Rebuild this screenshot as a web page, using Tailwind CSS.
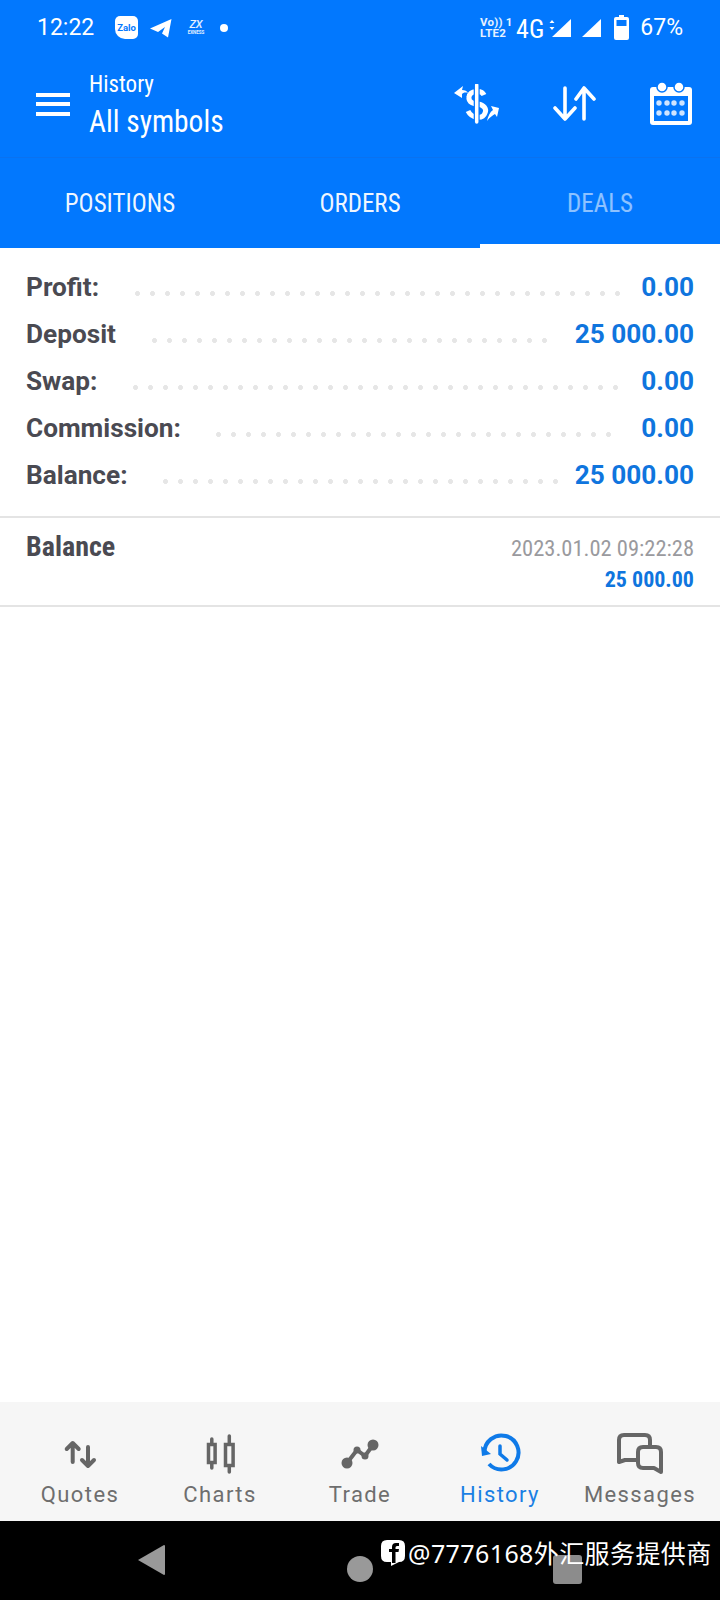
<!DOCTYPE html>
<html lang="en">
<head>
    <meta charset="UTF-8">
    <meta name="viewport" content="width=device-width, initial-scale=1.0">
    <title>History</title>
    <script src="https://cdn.jsdelivr.net/npm/@tailwindcss/browser@4"></script>
</head>
<body class="font-['Roboto',sans-serif] bg-white">
<div class="relative w-[720px] h-[1600px] flex flex-col overflow-hidden">

    <!-- status bar -->
    <div class="h-[52px] shrink-0 bg-[#0278fe] text-white flex items-center pl-[37px] pt-[3px]">
        <span class="text-[23px] w-[78px] mt-[2px]">12:22</span>
        <div class="w-[23px] h-[23px] bg-white rounded-[5px] rounded-bl-[10px] flex items-center justify-center">
            <span class="text-[#0278fe] text-[9.500px] font-bold leading-none">Zalo</span>
        </div>
        <svg class="ml-[12px]" width="22" height="20" viewBox="0 0 22 20"><path d="M0 10.500 L21.500 1 L18 19.500 L12 15.500 L15 9 L8 14 Z" fill="#fff"/></svg>
        <div class="ml-[15px] w-[18px] flex flex-col items-center leading-none">
            <span class="text-[11px] italic font-medium leading-[10px] text-white/90">ZX</span>
            <span class="text-[4.500px] font-bold leading-[5px] text-white/90">EXNESS</span>
        </div>
        <div class="ml-[15px] w-[8px] h-[8px] rounded-full bg-white"></div>

        <div class="ml-auto flex items-center">
            <div class="w-[28px] flex flex-col text-[11.500px] font-bold leading-[11px] tracking-[0.2px] text-white/90">
                <span class="whitespace-nowrap">Vo)) 1</span>
                <span class="whitespace-nowrap">LTE2</span>
            </div>
            <span class="ml-[8px] mt-[2px] text-[26px] leading-[30px] [font-stretch:75%]">4G</span>
            <svg class="ml-[5px]" width="22" height="20" viewBox="0 0 22 20">
                <path d="M3 3 L5.500 6 H0.500 Z M3 13 L0.500 10 H5.500 Z" fill="#fff" transform="translate(0 -1)"/>
                <path d="M22 1 V19 H3 Z" fill="#fff"/>
            </svg>
            <svg class="ml-[10px]" width="20" height="20" viewBox="0 0 20 20"><path d="M20 1 V19 H1 Z" fill="#fff"/></svg>
            <svg class="ml-[13px]" width="15" height="25" viewBox="0 0 15 25">
                <path d="M5 0 H10 V2 H13 Q15 2 15 4 V23 Q15 25 13 25 H2 Q0 25 0 23 V4 Q0 2 2 2 H5 Z" fill="#fff"/>
                <rect x="2.500" y="5" width="10" height="6" fill="#0278fe"/>
            </svg>
            <span class="ml-[11px] mr-[37px] mt-[2px] text-[23px]">67%</span>
        </div>
    </div>

    <!-- header -->
    <div class="h-[106px] shrink-0 bg-[#0278fe] border-b border-[#0a72f0] text-white flex items-center pl-[36px] pb-[1px]">
        <div class="w-[34px] h-[23px] flex flex-col justify-between">
            <div class="h-[4px] bg-white"></div>
            <div class="h-[4px] bg-white"></div>
            <div class="h-[4px] bg-white"></div>
        </div>
        <div class="ml-[19px] mt-[3px] flex flex-col [font-stretch:75%]">
            <span class="text-[23px] leading-[30px]">History</span>
            <span class="text-[32px] leading-[42px] scale-x-[0.92] origin-left whitespace-nowrap">All symbols</span>
        </div>
        <div class="ml-auto flex items-center pr-[27px]">
            <svg width="46" height="40" viewBox="0 0 46 40" fill="none">
                <path d="M30 11 C28 6 16 6 15 13 C14 19 21 20 24 20 C30 21 33 25 31 29 C29 35 18 35 14 27" stroke="#fff" stroke-width="5"/>
                <path d="M22.700 1 V38" stroke="#0278fe" stroke-width="6"/>
                <path d="M22.700 1 V38" stroke="#fff" stroke-width="3.500" stroke-linecap="round"/>
                <path d="M0 9 L9 2 L8 6 C11 6 13 7 14 9 C11 8 9 9 8 10 L8 14 Z" fill="#fff"/>
                <path d="M45 24 L37 22 L39 26 C36 28 34 32 33 37 C36 33 39 31 41 30 L43 33 Z" fill="#fff"/>
            </svg>
            <svg class="ml-[53px]" width="43" height="36" viewBox="0 0 43 36" fill="none" stroke="#fff" stroke-width="3.600" stroke-linecap="round" stroke-linejoin="round">
                <path d="M12 2 V33 M2 22 L12 33 L22 22"/>
                <path d="M31 33 V2 M23 13 L31 2 L41 13"/>
            </svg>
            <svg class="ml-[53px]" width="44" height="44" viewBox="0 0 44 44">
                <path d="M4 5 H40 Q43 5 43 8 V40 Q43 43 40 43 H4 Q1 43 1 40 V8 Q1 5 4 5 Z" fill="#fff"/>
                <path d="M5 14 H39 V39 H5 Z" fill="#0278fe"/>
                <circle cx="13" cy="5" r="5" fill="#fff" stroke="#0278fe" stroke-width="1.500"/>
                <circle cx="30" cy="5" r="5" fill="#fff" stroke="#0278fe" stroke-width="1.500"/>
                <g fill="#cfe4ff">
                    <circle cx="10" cy="21" r="2.700"/><circle cx="18" cy="21" r="2.700"/><circle cx="25" cy="21" r="2.700"/><circle cx="33" cy="21" r="2.700"/>
                    <circle cx="10" cy="31" r="2.700"/><circle cx="18" cy="31" r="2.700"/><circle cx="25" cy="31" r="2.700"/><circle cx="33" cy="31" r="2.700"/>
                </g>
            </svg>
        </div>
    </div>

    <!-- tabs -->
    <div class="h-[90px] shrink-0 bg-[#0278fe] grid grid-cols-3 text-[25px] font-[450] [font-stretch:75%]">
        <div class="flex items-center justify-center pt-[2px] text-white/95">POSITIONS</div>
        <div class="flex items-center justify-center pt-[2px] text-white/95">ORDERS</div>
        <div class="flex items-center justify-center pt-[5px] border-b-[4px] border-white text-white/55">DEALS</div>
    </div>

    <!-- summary -->
    <div class="h-[270px] shrink-0 border-b-2 border-[#e4e4e4] pt-[16px] pl-[26px] pr-[26px] flex flex-col text-[26.200px] font-bold text-[#4a4a52]">
        <div class="h-[47px] flex items-center">
            <span>Profit:</span>
            <div class="ml-[31px] w-[495px] h-[15px] mt-[11px] bg-[radial-gradient(circle,#e6e6e6_2.2px,transparent_2.6px)] bg-[length:15px_15px]"></div>
            <span class="ml-auto text-[#0f75de]">0.00</span>
        </div>
        <div class="h-[47px] flex items-center">
            <span>Deposit</span>
            <div class="ml-[31px] w-[405px] h-[15px] mt-[11px] bg-[radial-gradient(circle,#e6e6e6_2.2px,transparent_2.6px)] bg-[length:15px_15px]"></div>
            <span class="ml-auto text-[#0f75de]">25 000.00</span>
        </div>
        <div class="h-[47px] flex items-center">
            <span>Swap:</span>
            <div class="ml-[31px] w-[495px] h-[15px] mt-[11px] bg-[radial-gradient(circle,#e6e6e6_2.2px,transparent_2.6px)] bg-[length:15px_15px]"></div>
            <span class="ml-auto text-[#0f75de]">0.00</span>
        </div>
        <div class="h-[47px] flex items-center">
            <span>Commission:</span>
            <div class="ml-[30px] w-[405px] h-[15px] mt-[11px] bg-[radial-gradient(circle,#e6e6e6_2.2px,transparent_2.6px)] bg-[length:15px_15px]"></div>
            <span class="ml-auto text-[#0f75de]">0.00</span>
        </div>
        <div class="h-[47px] flex items-center">
            <span>Balance:</span>
            <div class="ml-[30px] w-[405px] h-[15px] mt-[11px] bg-[radial-gradient(circle,#e6e6e6_2.2px,transparent_2.6px)] bg-[length:15px_15px]"></div>
            <span class="ml-auto text-[#0f75de]">25 000.00</span>
        </div>
    </div>

    <!-- deal row -->
    <div class="h-[89px] shrink-0 border-b-2 border-[#e4e4e4] pl-[26px] pr-[26px] pt-[11px] flex justify-between [font-stretch:75%]">
        <span class="text-[28px] leading-[36px] font-bold text-[#4a4a52]">Balance</span>
        <div class="flex flex-col items-end mt-[3px]">
            <span class="text-[22.500px] leading-[32px] text-[#9a9a9e]">2023.01.02 09:22:28</span>
            <span class="text-[22px] leading-[31px] font-bold text-[#0f75de]">25 000.00</span>
        </div>
    </div>

    <div class="flex-1"></div>

    <!-- bottom nav -->
    <div class="h-[119px] shrink-0 bg-[#f6f6f6] grid grid-cols-5 px-[10px] text-[22px] tracking-[1.4px] text-[#6e6e6e]">
        <div class="flex flex-col items-center pt-[30px]">
            <svg width="48" height="44" viewBox="0 0 48 44" fill="none" stroke="#666" stroke-width="4" stroke-linecap="round" stroke-linejoin="round">
                <path d="M16.700 11 V30 M10.700 17 L16.700 11 L22.700 17"/>
                <path d="M32 15 V34 M26 28 L32 34 L38 28"/>
            </svg>
            <span class="leading-[28px] mt-[5px]">Quotes</span>
        </div>
        <div class="flex flex-col items-center pt-[30px]">
            <svg width="48" height="44" viewBox="0 0 48 44" fill="none" stroke="#666" stroke-width="3.500">
                <rect x="12.500" y="12.500" width="6.600" height="18"/>
                <rect x="29.500" y="12.500" width="7.600" height="21"/>
                <path d="M15.800 7 V12 M15.800 31 V36 M33.300 4 V12 M33.300 34 V40" stroke-linecap="round"/>
            </svg>
            <span class="leading-[28px] mt-[5px]">Charts</span>
        </div>
        <div class="flex flex-col items-center pt-[30px]">
            <svg width="48" height="44" viewBox="0 0 48 44" fill="none" stroke="#666" stroke-width="4">
                <path d="M11 31 L21 18 L29 24 L37 13"/>
                <circle cx="11" cy="31" r="5.500" fill="#666" stroke="none"/>
                <circle cx="21" cy="18" r="3.500" fill="#666" stroke="none"/>
                <circle cx="29" cy="24" r="3.500" fill="#666" stroke="none"/>
                <circle cx="37" cy="13" r="5.500" fill="#666" stroke="none"/>
            </svg>
            <span class="leading-[28px] mt-[5px]">Trade</span>
        </div>
        <div class="flex flex-col items-center pt-[30px] text-[#1a7fe4]">
            <svg width="48" height="44" viewBox="0 0 48 44" fill="none" stroke="#0f7ae8" stroke-width="4">
                <path d="M8.500 21 A17 17 0 1 1 13 32"/>
                <path d="M5 14 L6 24 L15 22 Z" fill="#0f7ae8" stroke="none"/>
                <path d="M24 14 V22 L31 28" stroke-width="3.500" stroke-linecap="round"/>
            </svg>
            <span class="leading-[28px] mt-[5px]">History</span>
        </div>
        <div class="flex flex-col items-center pt-[30px]">
            <svg width="48" height="44" viewBox="0 0 48 44" fill="none" stroke="#666" stroke-width="4" stroke-linejoin="round" stroke-linecap="round">
                <path d="M21 28 H9 L3 30 V8 Q3 3 8 3 H29 Q34 3 34 8 V15"/>
                <path d="M27 15 H40 Q45 15 45 20 V40 L38 36 H27 Q22 36 22 31 V20 Q22 15 27 15 Z"/>
            </svg>
            <span class="leading-[28px] mt-[5px]">Messages</span>
        </div>
    </div>

    <!-- system bar -->
    <div class="relative h-[79px] shrink-0 bg-black flex items-center pl-[138px]">
        <svg class="mt-[-1px]" width="27" height="32" viewBox="0 0 27 32"><path d="M0 16 L26 1 Q27 1 27 2 V30 Q27 31 26 31 Z" fill="#999"/></svg>
        <div class="ml-[182px] mt-[17px] w-[26px] h-[26px] rounded-full bg-[#999]"></div>
        <div class="ml-[180px] mt-[17px] w-[29px] h-[29px] rounded-[3px] bg-[#8c8c8c]"></div>

        <!-- watermark over the nav buttons -->
        <div class="absolute left-[381px] top-[15px] flex items-center text-white">
            <svg width="24" height="28" viewBox="0 0 24 28">
                <path d="M6 1 H18 Q24 1 24 7 V17 Q24 23 18 23 L10 27 V23 H6 Q0 23 0 17 V7 Q0 1 6 1 Z" fill="#fff"/>
                <path d="M11 24 V13 H8 V10 H11 V8 Q11 4 15 4 H18 V7 H16 Q14.500 7 14.500 8.500 V10 H18 L17.500 13 H14.500 V24 Z" fill="#000"/>
            </svg>
            <span class="ml-[3px] text-[25px] leading-[34px] tracking-[0.4px] whitespace-nowrap font-['Noto_Sans','Noto_Sans_CJK_SC',sans-serif]">@7776168外汇服务提供商</span>
        </div>
    </div>
</div>
</body>
</html>
